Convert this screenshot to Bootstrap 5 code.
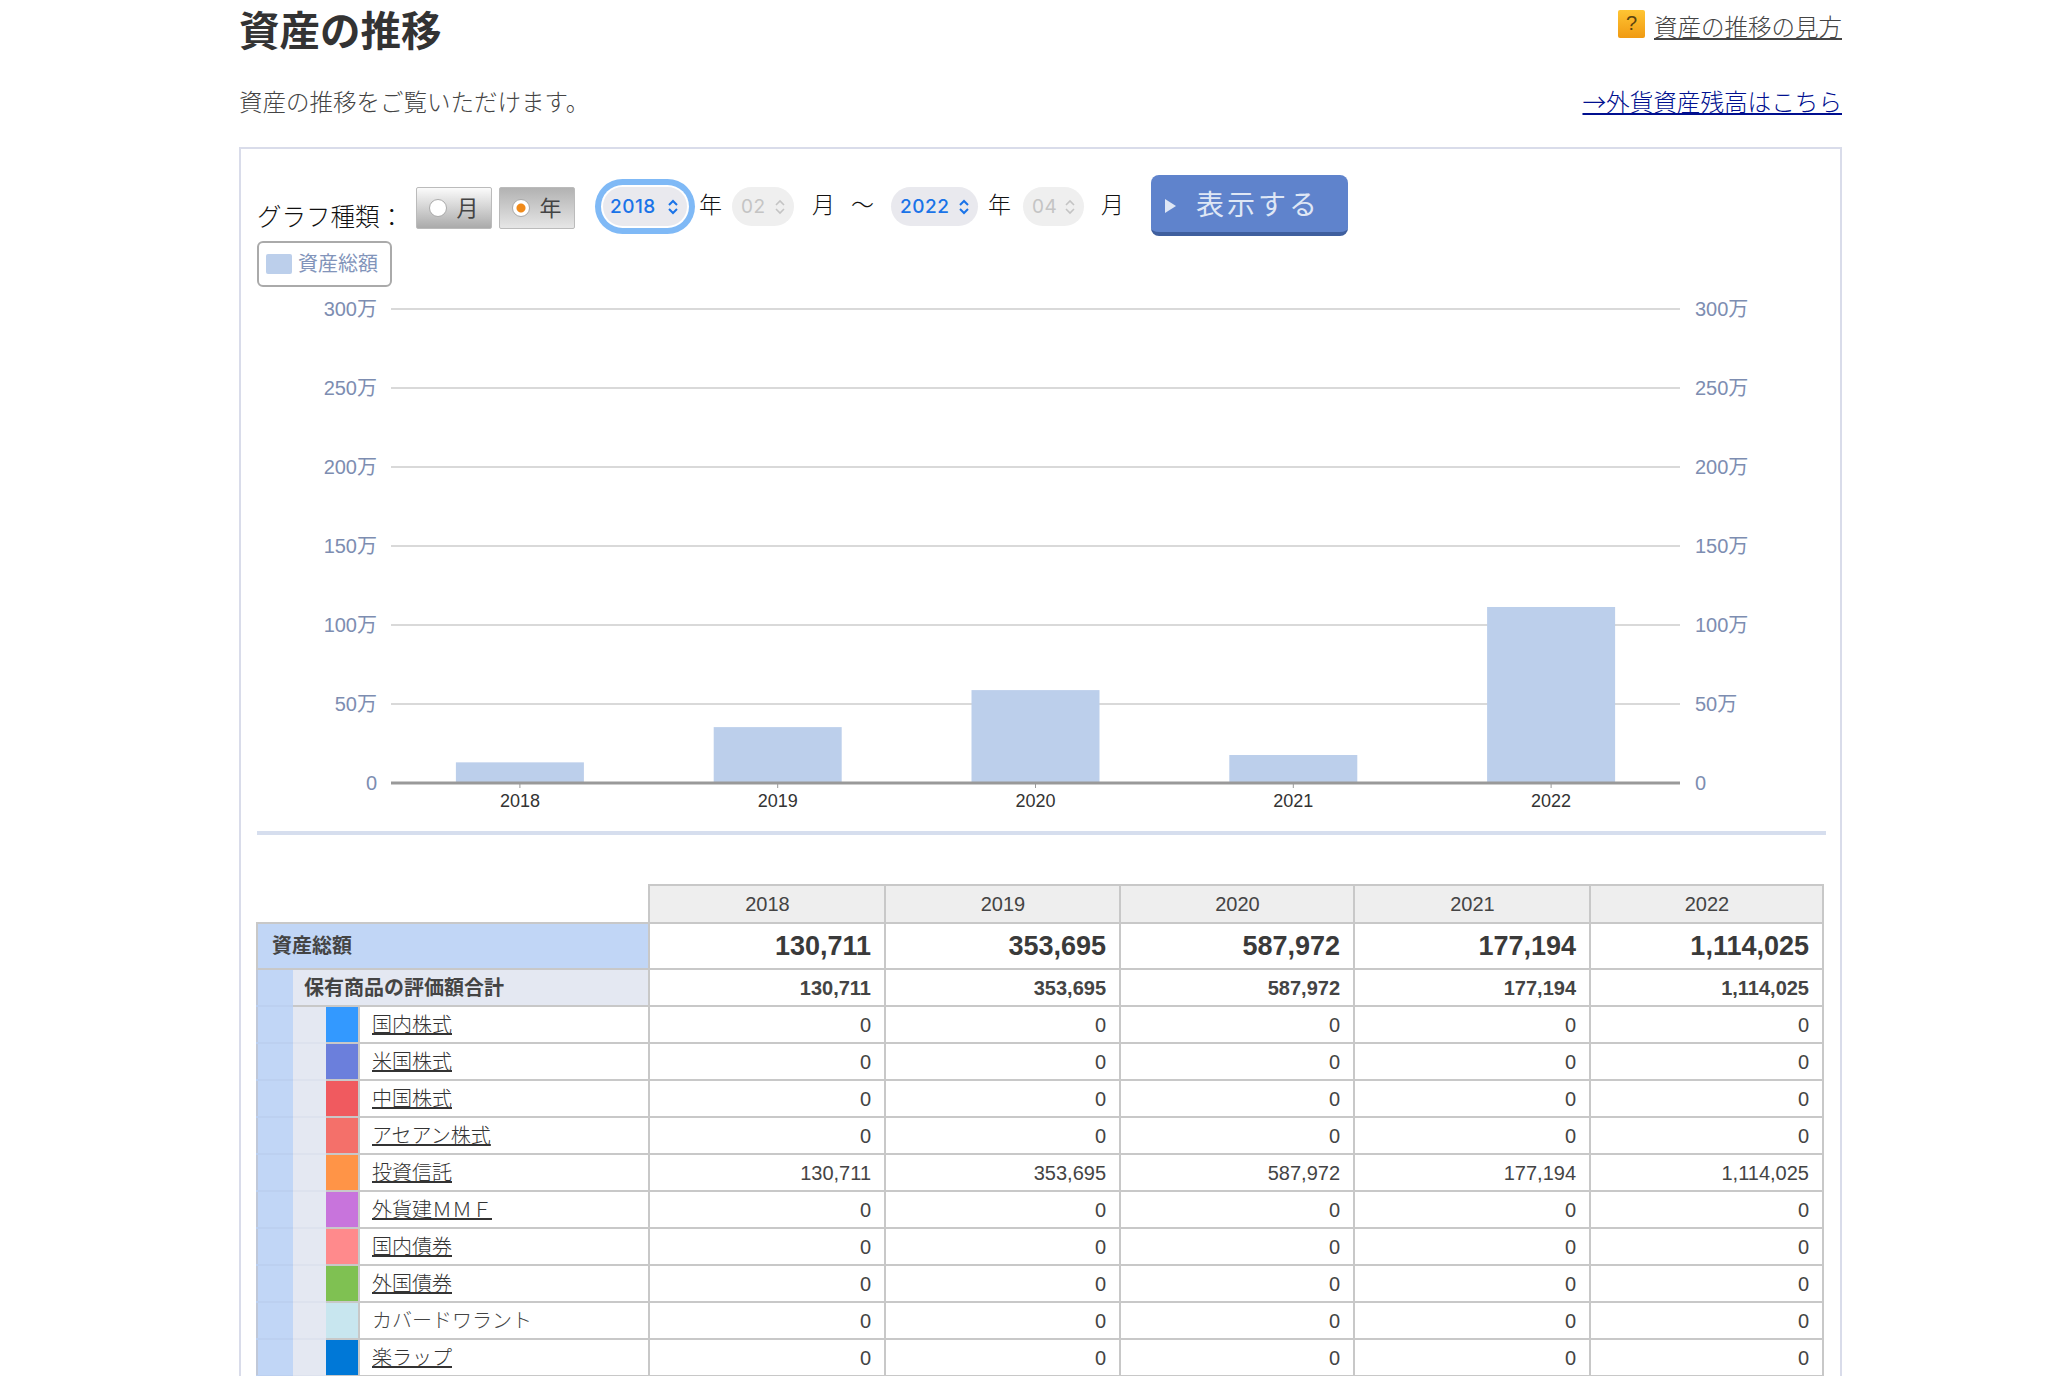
<!DOCTYPE html>
<html lang="ja">

<head>
  <meta charset="utf-8">
  <meta name="viewport" content="width=device-width">
  <title>資産の推移</title>
  <link href="https://cdn.jsdelivr.net/npm/bootstrap@5.3.3/dist/css/bootstrap.min.css" rel="stylesheet" type="text/css" />
  <style>
    html, body { height: 1376px; overflow: hidden; }
    body { font-family: "Liberation Sans", "Noto Sans CJK JP", sans-serif; color: #444; background: #fff; }
    .page-wrap { width: 1603px; margin-left: 239px; }
    .page-title { font-size: 40.5px; line-height: 48px; font-weight: 700; color: #333; margin: 8px 0 0; }
    .help-link { font-size: 23.5px; line-height: 30px; color: #444; font-weight: 300; }
    .help-link span:last-child { text-decoration: underline; }
    .help-icon { width: 27px; height: 28px; margin-right: 9px; margin-top: -8px; border-radius: 2px; background: linear-gradient(#ffc533, #f09a12); color: #5a4310; font-size: 20px; line-height: 26px; text-align: center; }
    .lead-row { margin-top: 32px; height: 30px; }
    .lead-text { font-size: 23.5px; line-height: 30px; color: #444; font-weight: 300; }
    .fx-link { font-family: "Noto Sans CJK JP", sans-serif; font-size: 23.6px; line-height: 30px; color: #000f8f; margin-top: -5px; font-weight: 300; }
    .chart-box { margin-top: 29px; border: 2px solid #d9dcea; border-bottom: 0; padding: 26px 0 0; height: 1229px; }
    .tool-row { padding-left: 16px; height: 61px; }
    .graph-label { font-size: 24.5px; line-height: 30px; color: #111; width: 159px; margin-top: 28px; white-space: nowrap; font-weight: 300; }
    .kind-btn { width: 76px; height: 42px; margin: 12px 7px 0 0; border: 1px solid #bbb; border-radius: 2px; font-size: 22px; color: #444; }
    .kind-off { background: linear-gradient(#fbfbfb, #aaa); }
    .kind-on { background: linear-gradient(#b2b2b2, #e6e6e6); }
    .radio-dot { width: 18px; height: 18px; margin-right: 9px; border-radius: 50%; background: #fff; border: 1px solid #aaa; }
    .kind-on .radio-dot { background: radial-gradient(circle, #f08a1a 0 4px, #fff 5px); }
    .pill { height: 39px; margin-top: 12px; padding: 1px 8px 0 9px; border-radius: 20px; background: #e9e9ee; color: #1a73e8; font-family: Inter, "Liberation Sans", sans-serif; font-size: 19px; font-weight: 500; letter-spacing: .5px; }
    .pill svg { stroke: #1a73e8; }
    .pill-off { background: #efefef; color: #c4c4c4; font-weight: 400; }
    .pill-off svg { stroke: #c4c4c4; }
    .pill-ring { box-shadow: 0 0 0 2px #fff, 0 0 0 8px #7fb9f6; }
    .pill-from-year { width: 84px; margin-left: 21px; padding-left: 7px; }
    .pill-from-month { width: 62px; margin-left: 10px; }
    .pill-to-year { width: 87px; margin-left: 17px; }
    .pill-to-month { width: 61px; margin-left: 12px; }
    .unit-text { font-size: 23px; line-height: 30px; color: #111; margin-top: 15px; white-space: nowrap; font-weight: 300; }
    .unit-a { margin-left: 12px; }
    .unit-b { margin-left: 10px; }
    .unit-c { margin-left: 18px; }
    .unit-wave { margin-left: 16px; }
    .unit-d { margin-left: 17px; }
    .show-btn { width: 197px; height: 61px; margin-left: 27px; padding: 4px 0 0 14px; gap: 20px; background: #5f83cc; border: 0; border-bottom: 4px solid #3f5f9e; border-radius: 8px; color: #dfe7f5; font-size: 28px; letter-spacing: 3px; }
    .legend-box { margin: 5px 0 0 16px; width: 135px; height: 46px; border: 2px solid #aaa; border-radius: 6px; padding-left: 7px; gap: 6px; font-size: 20px; color: #8294ba; }
    .legend-swatch { width: 26px; height: 20px; background: #bccfeb; border-radius: 2px; }
    .chart-svg { display: block; }
    .chart-svg text { font-family: "Liberation Sans", "Noto Sans CJK JP", sans-serif; }
    .box-rule { height: 4px; background: #d6deee; margin: 5px 14px 0 16px; }
    .asset-tbl { width: 1566px; margin: 49px 0 0 15px; table-layout: fixed; border-collapse: collapse; font-size: 20px; line-height: 24px; }
    .asset-tbl th, .asset-tbl td { padding: 0 13px 0 14px; border: 2px solid #c8c8c8; color: #444; vertical-align: middle; height: 37px; background: #fff; }
    .asset-tbl .num-cell { text-align: right; }
    .asset-tbl .head-blank { border: 0; border-bottom: 2px solid #c8c8c8; background: #fff; }
    .asset-tbl .head-year { background: #eee; font-weight: 400; text-align: center; height: 38px; }
    .asset-tbl .total-label { background: #c1d6f6; font-weight: 700; height: 46px; }
    .asset-tbl .total-num { font-size: 27px; font-weight: 700; text-align: right; color: #3a3a3a; }
    .asset-tbl .sub-label { background: #e4e8f2; font-weight: 700; padding-left: 11px; }
    .asset-tbl .sub-num { font-weight: 700; text-align: right; }
    .asset-tbl .blue-side { background: #c1d6f6; border-color: #bcd0f0 #c1d6f6 #bcd0f0 #c0c8d8; padding: 0; }
    .asset-tbl .lav-side { background: #e4e8f2; border-color: #dde2ee #e4e8f2; padding: 0; }
    .asset-tbl .swatch-cell { padding: 0; }
    .asset-tbl .name-cell { padding-left: 12px; white-space: nowrap; font-weight: 300; }
    .asset-tbl a { color: #333; }
    .w-side-a { width: 35px; }
    .w-side-b { width: 33px; }
    .w-swatch { width: 34px; }
    .w-name { width: 290px; }
    .w-y18, .w-y21 { width: 236px; }
    .w-y19 { width: 235px; }
    .w-y20 { width: 234px; }
    .w-y22 { width: 233px; }
  </style>
</head>

<body>
  <div class="page-wrap">
    <div class="d-flex justify-content-between align-items-center">
      <h1 class="page-title">資産の推移</h1>
      <div class="d-flex align-items-center help-link">
        <span class="help-icon">?</span>
        <span>資産の推移の見方</span>
      </div>
    </div>

    <div class="d-flex justify-content-between align-items-center lead-row">
      <div class="lead-text">資産の推移をご覧いただけます。</div>
      <a class="fx-link" href="#">→外貨資産残高はこちら</a>
    </div>

    <section class="chart-box">
      <div class="d-flex align-items-start tool-row">
        <div class="graph-label">グラフ種類：</div>
        <div class="d-flex align-items-center justify-content-center kind-btn kind-off"><span class="radio-dot"></span>月</div>
        <div class="d-flex align-items-center justify-content-center kind-btn kind-on"><span class="radio-dot"></span>年</div>
        <div class="d-flex align-items-center justify-content-between pill pill-ring pill-from-year">2018
          <svg width="12" height="18" viewBox="0 0 12 18" fill="none" stroke-width="2"><path d="M2 7l4-4 4 4M2 11l4 4 4-4"/></svg>
        </div>
        <div class="unit-text unit-a">年</div>
        <div class="d-flex align-items-center justify-content-between pill pill-off pill-from-month">02
          <svg width="12" height="18" viewBox="0 0 12 18" fill="none" stroke-width="1.6"><path d="M2 7l4-4 4 4M2 11l4 4 4-4"/></svg>
        </div>
        <div class="unit-text unit-c">月</div>
        <div class="unit-text unit-wave">～</div>
        <div class="d-flex align-items-center justify-content-between pill pill-to-year">2022
          <svg width="12" height="18" viewBox="0 0 12 18" fill="none" stroke-width="2"><path d="M2 7l4-4 4 4M2 11l4 4 4-4"/></svg>
        </div>
        <div class="unit-text unit-b">年</div>
        <div class="d-flex align-items-center justify-content-between pill pill-off pill-to-month">04
          <svg width="12" height="18" viewBox="0 0 12 18" fill="none" stroke-width="1.6"><path d="M2 7l4-4 4 4M2 11l4 4 4-4"/></svg>
        </div>
        <div class="unit-text unit-d">月</div>
        <button type="button" class="btn d-flex align-items-center show-btn">
          <svg width="11" height="14" viewBox="0 0 11 14"><path d="M0 0l11 7-11 7z" fill="#dfe7f5"/></svg>
          <span>表示する</span>
        </button>
      </div>

      <div class="d-flex align-items-center legend-box">
        <span class="legend-swatch"></span>
        <span>資産総額</span>
      </div>

      <!-- viewBox in page coords so the chart numbers read straight off the screenshot -->
      <svg id="assetChart" class="chart-svg" width="1599" height="539" viewBox="241 287 1599 539"></svg>
      <div class="box-rule"></div>

      <table class="table asset-tbl">
        <colgroup>
          <col class="w-side-a"><col class="w-side-b"><col class="w-swatch"><col class="w-name">
          <col class="w-y18"><col class="w-y19"><col class="w-y20"><col class="w-y21"><col class="w-y22">
        </colgroup>
        <tbody id="assetRows"></tbody>
      </table>
    </section>
  </div>

  <script src="https://cdn.jsdelivr.net/npm/bootstrap@5.3.3/dist/js/bootstrap.bundle.min.js"></script>
  <script>
    const years = [2018, 2019, 2020, 2021, 2022];
    const totals = ["130,711", "353,695", "587,972", "177,194", "1,114,025"];
    const barValues = [130711, 353695, 587972, 177194, 1114025];
    const products = [
      { name: "国内株式", color: "#3399ff", link: true },
      { name: "米国株式", color: "#6b7fdc", link: true },
      { name: "中国株式", color: "#f05a5f", link: true },
      { name: "アセアン株式", color: "#f4706a", link: true },
      { name: "投資信託", color: "#ff9447", link: true, values: totals },
      { name: "外貨建ＭＭＦ", color: "#c874dc", link: true },
      { name: "国内債券", color: "#ff8a8c", link: true },
      { name: "外国債券", color: "#7fc152", link: true },
      { name: "カバードワラント", color: "#c8e6ef", link: false },
      { name: "楽ラップ", color: "#0078d7", link: true }
    ];

    // chart
    const plotLeft = 391, plotRight = 1680, plotBase = 783, plotTop = 309;
    const step = (plotRight - plotLeft) / 5;
    const axis = ["0", "50万", "100万", "150万", "200万", "250万", "300万"];
    let svg = "";
    axis.forEach(function (label, i) {
      const y = plotBase - i * (plotBase - plotTop) / 6;
      if (i > 0) svg += `<line x1="${plotLeft}" x2="${plotRight}" y1="${y}" y2="${y}" stroke="#d9d9d9" stroke-width="2"/>`;
      svg += `<text x="377" y="${y + 7}" text-anchor="end" font-size="20" fill="#7d8db1">${label}</text>`;
      svg += `<text x="1695" y="${y + 7}" font-size="20" fill="#7d8db1">${label}</text>`;
    });
    barValues.forEach(function (v, i) {
      const cx = plotLeft + step * (i + 0.5);
      const h = v / 3000000 * (plotBase - plotTop);
      svg += `<rect x="${cx - 64}" y="${plotBase - h}" width="128" height="${h}" fill="#bccfeb"/>`;
      svg += `<line x1="${cx}" x2="${cx}" y1="${plotBase}" y2="788" stroke="#999" stroke-width="1"/>`;
      svg += `<text x="${cx}" y="807" text-anchor="middle" font-size="18" fill="#333">${years[i]}</text>`;
    });
    svg += `<line x1="${plotLeft}" x2="${plotRight}" y1="${plotBase}" y2="${plotBase}" stroke="#999" stroke-width="3"/>`;
    document.getElementById("assetChart").innerHTML = svg;

    // table
    let rows = `<tr><th class="head-blank" colspan="4"></th>${years.map(y => `<th class="head-year">${y}</th>`).join("")}</tr>`;
    rows += `<tr><th class="total-label" colspan="4">資産総額</th>${totals.map(t => `<td class="total-num">${t}</td>`).join("")}</tr>`;
    rows += `<tr><td class="blue-side"></td><th class="sub-label" colspan="3">保有商品の評価額合計</th>${totals.map(t => `<td class="sub-num">${t}</td>`).join("")}</tr>`;
    products.forEach(function (p) {
      const name = p.link ? `<a href="#">${p.name}</a>` : p.name;
      const vals = p.values || ["0", "0", "0", "0", "0"];
      rows += `<tr><td class="blue-side"></td><td class="lav-side"></td><td class="swatch-cell" style="background:${p.color}"></td>`;
      rows += `<td class="name-cell">${name}</td>${vals.map(v => `<td class="num-cell">${v}</td>`).join("")}</tr>`;
    });
    document.getElementById("assetRows").innerHTML = rows;
  </script>
</body>
</html>
